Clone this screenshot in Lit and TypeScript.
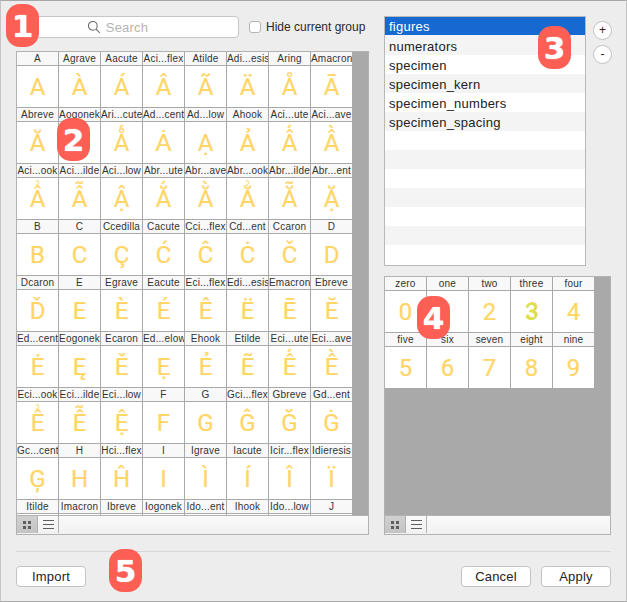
import { LitElement, html, css } from 'lit';
import { customElement } from 'lit/decorators.js';

// name, base character, optional mark stacked on top of the base
type Glyph = [string, string, string?];

const MAIN_GLYPHS: Glyph[] = [
  ['A', 'A'], ['Agrave', 'À'], ['Aacute', 'Á'], ['Aci...flex', 'Â'], ['Atilde', 'Ã'], ['Adi...esis', 'Ä'], ['Aring', 'Å'], ['Amacron', 'Ā'],
  ['Abreve', 'Ă'], ['Aogonek', 'Ą'], ['Ari...cute', 'Å', '´'], ['Ad...cent', 'Ȧ'], ['Ad...low', 'Ạ'], ['Ahook', 'Ả'], ['Aci...ute', 'Â', '´'], ['Aci...ave', 'Â', '`'],
  ['Aci...ook', 'Â', 'ˀ'], ['Aci...ilde', 'Â', '˜'], ['Aci...low', 'Ậ'], ['Abr...ute', 'Ă', '´'], ['Abr...ave', 'Ă', '`'], ['Abr...ook', 'Ă', 'ˀ'], ['Abr...ilde', 'Ă', '˜'], ['Abr...ent', 'Ặ'],
  ['B', 'B'], ['C', 'C'], ['Ccedilla', 'Ç'], ['Cacute', 'Ć'], ['Cci...flex', 'Ĉ'], ['Cd...ent', 'Ċ'], ['Ccaron', 'Č'], ['D', 'D'],
  ['Dcaron', 'Ď'], ['E', 'E'], ['Egrave', 'È'], ['Eacute', 'É'], ['Eci...flex', 'Ê'], ['Edi...esis', 'Ë'], ['Emacron', 'Ē'], ['Ebreve', 'Ĕ'],
  ['Ed...cent', 'Ė'], ['Eogonek', 'Ę'], ['Ecaron', 'Ě'], ['Ed...elow', 'Ẹ'], ['Ehook', 'Ẻ'], ['Etilde', 'Ẽ'], ['Eci...ute', 'Ê', '´'], ['Eci...ave', 'Ê', '`'],
  ['Eci...ook', 'Ê', 'ˀ'], ['Eci...ilde', 'Ê', '˜'], ['Eci...low', 'Ệ'], ['F', 'F'], ['G', 'G'], ['Gci...flex', 'Ĝ'], ['Gbreve', 'Ğ'], ['Gd...ent', 'Ġ'],
  ['Gc...cent', 'Ģ'], ['H', 'H'], ['Hci...flex', 'Ĥ'], ['I', 'I'], ['Igrave', 'Ì'], ['Iacute', 'Í'], ['Icir...flex', 'Î'], ['Idieresis', 'Ï'],
  ['Itilde', 'Ĩ'], ['Imacron', 'Ī'], ['Ibreve', 'Ĭ'], ['Iogonek', 'Į'], ['Ido...ent', 'İ'], ['Ihook', 'Ỉ'], ['Ido...low', 'Ị'], ['J', 'J'],
];

const FIGURES: Glyph[] = [
  ['zero', '0'], ['one', '1'], ['two', '2'], ['three', '3'], ['four', '4'],
  ['five', '5'], ['six', '6'], ['seven', '7'], ['eight', '8'], ['nine', '9'],
];

const GROUPS = ['figures', 'numerators', 'specimen', 'specimen_kern', 'specimen_numbers', 'specimen_spacing'];

@customElement('app-root')
export class AppRoot extends LitElement {
  static styles = css`
    :host {
      display: block;
      width: 627px;
      height: 602px;
      font-family: 'Liberation Sans', Arial, sans-serif;
    }
    .window {
      position: relative;
      box-sizing: border-box;
      width: 627px;
      height: 602px;
      background: #ededed;
      border-top: 1px solid #a8a8a8;
      border-left: 1px solid #c4c4c4;
      border-right: 1px solid #c4c4c4;
      border-bottom: 1px solid #a8a8a8;
      padding: 15px 15px 14px 15px;
      overflow: hidden;
    }
    .columns {
      display: flex;
      gap: 15px;
    }
    .left {
      flex: none;
      width: 353px;
    }
    .right {
      display: flex;
      flex-direction: column;
      gap: 10px;
    }
    .toolbar {
      display: flex;
      align-items: center;
      height: 22px;
      margin-bottom: 13px;
    }
    .search {
      flex: none;
      box-sizing: border-box;
      width: 223px;
      height: 22px;
      display: flex;
      align-items: center;
      justify-content: center;
      gap: 5px;
      padding-right: 20px;
      background: #fff;
      border: 1px solid #c6c6c6;
      border-radius: 4px;
      color: #b4b4b4;
      font-size: 13px;
      letter-spacing: 0.2px;
    }
    .hide {
      flex: none;
      display: flex;
      align-items: center;
      gap: 5px;
      margin-left: 10px;
      font-size: 12px;
      white-space: nowrap;
      color: #2a2a2a;
    }
    .check {
      box-sizing: border-box;
      width: 12px;
      height: 12px;
      background: #fff;
      border: 1px solid #b4b4b4;
      border-radius: 3px;
    }
    .panel {
      box-sizing: border-box;
      border: 1px solid #b2b2b2;
      background: #a9a9a9;
      display: flex;
      flex-direction: column;
    }
    .panel.main {
      width: 353px;
      height: 484px;
    }
    .panel.figures {
      width: 227px;
      height: 259px;
    }
    .scroll {
      flex: 1;
      min-height: 0;
      overflow: hidden;
    }
    .cells {
      display: grid;
      grid-template-columns: repeat(var(--cols), 41px);
      column-gap: 1px;
      row-gap: 1px;
    }
    .main .cells {
      width: 335px;
    }
    .figures .cells {
      width: 209px;
    }
    .cell {
      display: flex;
      flex-direction: column;
      gap: 1px;
      min-width: 0;
    }
    .label {
      height: 13px;
      line-height: 14px;
      background: #f8f8f8;
      color: #333;
      font-size: 10px;
      letter-spacing: 0.2px;
      text-align: center;
      white-space: nowrap;
      overflow: hidden;
    }
    .glyph {
      height: 41px;
      background: #fff;
      color: #ffd566;
      font-family: Roboto, sans-serif;
      font-size: 24px;
      line-height: 43px;
      text-align: center;
      -webkit-text-stroke: 0.2px #ffd566;
      overflow: hidden;
    }
    .glyph.three {
      color: #d4e24e;
      -webkit-text-stroke: 0;
      text-shadow: 1px -1px 0 #ffd566;
    }
    .stack {
      position: relative;
      display: inline-block;
    }
    .mark {
      position: absolute;
      left: 0;
      right: 0;
      top: -9px;
      text-align: center;
      font-size: 22px;
    }
    .mark.hook {
      top: -14px;
      font-size: 11px;
    }
    .bar {
      display: flex;
      flex: none;
      height: 18px;
      background: linear-gradient(#fafafa, #f1f1f1);
      border-top: 1px solid #b2b2b2;
    }
    .bar button {
      box-sizing: border-box;
      width: 21px;
      height: 17px;
      padding: 0;
      display: flex;
      align-items: center;
      justify-content: center;
      background: transparent;
      border: 0;
      border-right: 1px solid #b2b2b2;
    }
    .bar button.active {
      background: linear-gradient(#d0d0d0, #c4c4c4);
    }
    .bar svg {
      display: block;
      fill: #5e5e5e;
    }
    .groups-row {
      display: flex;
      gap: 7px;
    }
    .groups {
      box-sizing: border-box;
      width: 202px;
      height: 250px;
      background: #fff;
      border: 1px solid #b8b8b8;
      overflow: hidden;
    }
    .group {
      height: 19px;
      line-height: 22px;
      padding-left: 4px;
      font-size: 13px;
      letter-spacing: 0.25px;
      color: #222;
    }
    .group.alt {
      background: #f4f4f4;
    }
    .group.selected {
      height: 18px;
      line-height: 20px;
      background: #1569d0;
      color: #fff;
    }
    .group.selected + .group {
      height: 20px;
      line-height: 23px;
    }
    .steppers {
      display: flex;
      flex-direction: column;
      gap: 5px;
      padding-top: 5px;
    }
    .stepper {
      box-sizing: border-box;
      width: 19px;
      height: 19px;
      padding: 0 0 1px;
      background: #fff;
      border: 1px solid #c2c2c2;
      border-radius: 50%;
      color: #222;
      font: 12px/1 'Liberation Sans', sans-serif;
    }
    .divider {
      height: 1px;
      margin-top: 16px;
      background: #d8d8d8;
    }
    .actions {
      display: flex;
      justify-content: space-between;
      margin-top: 14px;
    }
    .actions div {
      display: flex;
      gap: 10px;
    }
    .btn {
      box-sizing: border-box;
      width: 70px;
      height: 21px;
      padding: 0;
      background: #fff;
      border: 1px solid #c4c4c4;
      border-radius: 4px;
      color: #222;
      font: 13px 'Liberation Sans', sans-serif;
      letter-spacing: 0.2px;
    }
    .badge {
      position: absolute;
      width: 33px;
      height: 43px;
      display: flex;
      align-items: center;
      justify-content: center;
      background: #fe5f55;
      border-radius: 14px;
      color: #fff;
      font-family: 'DejaVu Sans', sans-serif;
      font-size: 31px;
      font-weight: 700;
      text-shadow: 0 0 1px #fff;
    }
    .tick {
      position: absolute;
      right: -1px;
      width: 1px;
      height: 9px;
      background: #111;
    }
    .tick.upper {
      top: 301px;
    }
    .tick.lower {
      top: 360px;
    }
  `;

  private gridIcon() {
    return html`<svg width="10" height="10" viewBox="0 0 10 10">
      <rect x="1" y="1" width="3" height="3"></rect>
      <rect x="6" y="1" width="3" height="3"></rect>
      <rect x="1" y="6" width="3" height="3"></rect>
      <rect x="6" y="6" width="3" height="3"></rect>
    </svg>`;
  }

  private listIcon() {
    return html`<svg width="11" height="9" viewBox="0 0 11 9">
      <rect y="0" width="11" height="1"></rect>
      <rect y="4" width="11" height="1"></rect>
      <rect y="8" width="11" height="1"></rect>
    </svg>`;
  }

  private renderGlyph(char: string, mark?: string) {
    if (!mark) return char;
    return html`<span class="stack">${char}<span class="mark ${mark === 'ˀ' ? 'hook' : ''}">${mark}</span></span>`;
  }

  private renderPanel(kind: string, cols: number, glyphs: Glyph[]) {
    return html`<div class="panel ${kind}">
      <div class="scroll">
        <div class="cells" style="--cols:${cols}">
          ${glyphs.map(([name, char, mark]) => html`<div class="cell">
            <div class="label">${name}</div>
            <div class="glyph ${name === 'three' ? 'three' : ''}">${this.renderGlyph(char, mark)}</div>
          </div>`)}
        </div>
      </div>
      <div class="bar">
        <button class="active">${this.gridIcon()}</button>
        <button>${this.listIcon()}</button>
      </div>
    </div>`;
  }

  render() {
    // 13 rows fit the list, the empty ones keep the zebra stripes
    const rows = Array.from({ length: 13 }, (_, i) => GROUPS[i] ?? '');

    return html`<div class="window">
      <div class="columns">
        <div class="left">
          <div class="toolbar">
            <div class="search">
              <svg width="14" height="14" viewBox="0 0 15 15" fill="none" stroke="#666" stroke-width="1.1">
                <circle cx="6.2" cy="6.2" r="4.7"></circle>
                <path d="M9.7 9.7l4 4"></path>
              </svg>
              <span>Search</span>
            </div>
            <label class="hide"><span class="check"></span>Hide current group</label>
          </div>
          ${this.renderPanel('main', 8, MAIN_GLYPHS)}
        </div>
        <div class="right">
          <div class="groups-row">
            <div class="groups">
              ${rows.map((name, i) => html`<div class="group ${i === 0 ? 'selected' : i % 2 ? 'alt' : ''}">${name}</div>`)}
            </div>
            <div class="steppers">
              <button class="stepper">+</button>
              <button class="stepper">-</button>
            </div>
          </div>
          ${this.renderPanel('figures', 5, FIGURES)}
        </div>
      </div>
      <div class="divider"></div>
      <div class="actions">
        <button class="btn">Import</button>
        <div>
          <button class="btn">Cancel</button>
          <button class="btn">Apply</button>
        </div>
      </div>
      <div class="badge" style="left:5px;top:3px">1</div>
      <div class="badge" style="left:56px;top:117px">2</div>
      <div class="badge" style="left:537px;top:25px">3</div>
      <div class="badge" style="left:416px;top:295px">4</div>
      <div class="badge" style="left:108px;top:548px">5</div>
      <div class="tick upper"></div>
      <div class="tick lower"></div>
    </div>`;
  }
}
